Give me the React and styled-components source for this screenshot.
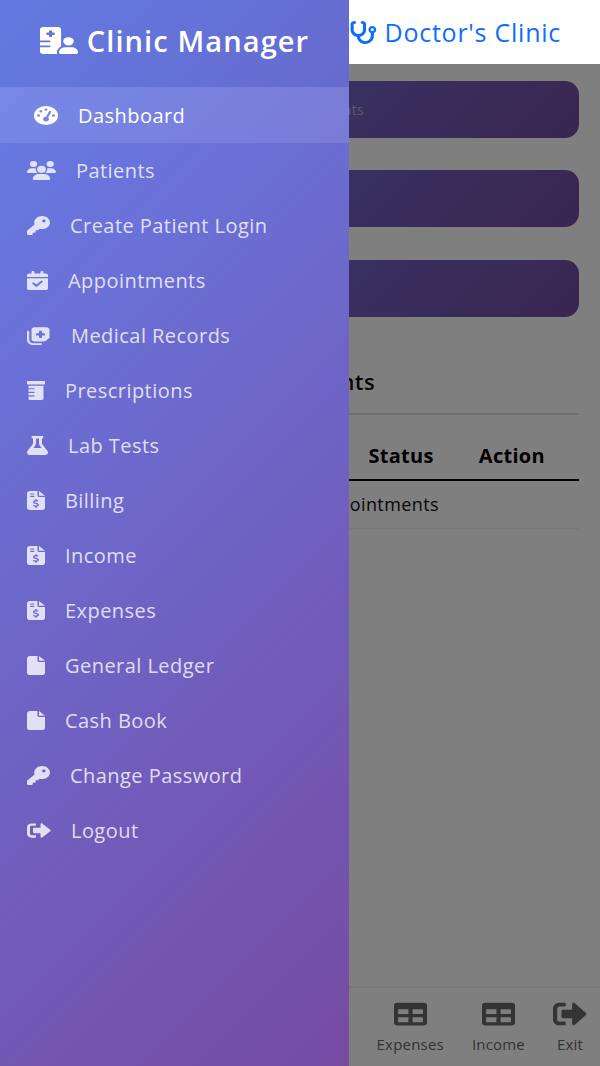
import React from 'react';
import styled, { createGlobalStyle } from 'styled-components';
import { FaHospitalUser, FaUsers, FaKey, FaCalendarCheck, FaNotesMedical, FaFlask, FaFileInvoiceDollar, FaFile, FaStethoscope, FaGaugeHigh } from 'react-icons/fa6';
import { FaPrescriptionBottle, FaSignOutAlt, FaTable } from 'react-icons/fa';

const NAV_LINKS = [
  { name: 'Dashboard', icon: FaGaugeHigh, width: 24, active: true },
  { name: 'Patients', icon: FaUsers, width: 29 },
  { name: 'Create Patient Login', icon: FaKey, width: 23 },
  { name: 'Appointments', icon: FaCalendarCheck, width: 21 },
  { name: 'Medical Records', icon: FaNotesMedical, width: 24 },
  { name: 'Prescriptions', icon: FaPrescriptionBottle, width: 18 },
  { name: 'Lab Tests', icon: FaFlask, width: 21 },
  { name: 'Billing', icon: FaFileInvoiceDollar, width: 18 },
  { name: 'Income', icon: FaFileInvoiceDollar, width: 18 },
  { name: 'Expenses', icon: FaFileInvoiceDollar, width: 18 },
  { name: 'General Ledger', icon: FaFile, width: 18 },
  { name: 'Cash Book', icon: FaFile, width: 18 },
  { name: 'Change Password', icon: FaKey, width: 23 },
  { name: 'Logout', icon: FaSignOutAlt, width: 24 },
];

const BOTTOM_LINKS = [
  { name: 'Expenses', icon: FaTable },
  { name: 'Income', icon: FaTable },
  { name: 'Exit', icon: FaSignOutAlt, tall: true },
];

export default function App() {
  return (
    <Page>
      <GlobalStyle />
      <TopBar>
        <Brand>
          <FaStethoscope preserveAspectRatio="none" />
          <span>Doctor's Clinic</span>
        </Brand>
      </TopBar>
      <Content>
        <StatCard>Appointments</StatCard>
        <StatCard />
        <StatCard />
        <SectionTitle>Appointments</SectionTitle>
        <TableHead>
          <span>Status</span>
          <span>Action</span>
        </TableHead>
        <TableRow>No Appointments</TableRow>
      </Content>
      <BottomNav>
        {BOTTOM_LINKS.map((link) => (
          <BottomItem key={link.name} $tall={link.tall}>
            <link.icon preserveAspectRatio="none" />
            <span>{link.name}</span>
          </BottomItem>
        ))}
      </BottomNav>
      <Overlay />
      <Drawer>
        <DrawerHeader>
          <FaHospitalUser preserveAspectRatio="none" />
          <span>Clinic Manager</span>
        </DrawerHeader>
        <NavList>
          {NAV_LINKS.map((link) => (
            <NavItem key={link.name} $active={link.active} $iconWidth={link.width}>
              <link.icon preserveAspectRatio="none" />
              <span>{link.name}</span>
            </NavItem>
          ))}
        </NavList>
      </Drawer>
    </Page>
  );
}

const GlobalStyle = createGlobalStyle`
  html, body {
    margin: 0;
    padding: 0;
    background: #fff;
  }
  * {
    box-sizing: border-box;
  }
`;

const Page = styled.div`
  position: relative;
  width: 600px;
  height: 1066px;
  overflow: hidden;
  display: flex;
  flex-direction: column;
  background: #fff;
  font-family: "Open Sans", "Noto Sans", sans-serif;
`;

const TopBar = styled.header`
  position: relative;
  z-index: 2;
  flex: none;
  height: 64px;
  background: #fff;
  display: flex;
  align-items: center;
  justify-content: flex-end;
  padding-right: 39px;
`;

const Brand = styled.div`
  display: flex;
  align-items: center;
  gap: 8px;
  color: #0d6efd;
  font-size: 25px;
  letter-spacing: 0.75px;

  svg {
    height: 23px;
    width: 28px;
  }
`;

const Content = styled.main`
  flex: 1;
  display: flex;
  flex-direction: column;
  padding: 17px 21px 0;
`;

const StatCard = styled.div`
  flex: none;
  height: 57px;
  margin-bottom: 32px;
  border-radius: 14px;
  background: linear-gradient(135deg, #667eea, #764ba2);
  display: flex;
  align-items: center;
  justify-content: flex-end;
  padding: 0 215px 0 0;
  color: rgba(255, 255, 255, 0.55);
  font-size: 14px;
  letter-spacing: 0.3px;

  &:nth-of-type(2) {
    margin-bottom: 33px;
  }
`;

const SectionTitle = styled.h2`
  margin: 0;
  height: 66px;
  display: flex;
  align-items: center;
  justify-content: flex-end;
  padding: 0 204px 0 0;
  border-bottom: 2px solid #ddd;
  font-size: 22px;
  letter-spacing: 0.4px;
  font-weight: 600;
  color: #111;
`;

const TableHead = styled.div`
  height: 66px;
  display: flex;
  align-items: center;
  justify-content: flex-end;
  gap: 45px;
  padding: 16px 34px 0 0;
  border-bottom: 2px solid #000;
  font-size: 20px;
  letter-spacing: 0.3px;
  font-weight: 700;
  color: #000;
`;

const TableRow = styled.div`
  height: 48px;
  display: flex;
  align-items: center;
  justify-content: flex-end;
  padding: 0 140px 2px 0;
  border-bottom: 1px solid #eee;
  font-size: 18px;
  letter-spacing: 0.4px;
  color: #111;
`;

const BottomNav = styled.nav`
  flex: none;
  height: 78px;
  background: #fff;
  box-shadow: 0 -1px 3px rgba(0, 0, 0, 0.1);
  display: flex;
  justify-content: flex-end;
  align-items: flex-start;
  gap: 28px;
  padding: 13px 13px 0 0;
`;

const BottomItem = styled.div`
  min-width: 34px;
  display: flex;
  flex-direction: column;
  align-items: center;
  gap: 7px;
  font-size: 15px;
  letter-spacing: 0.2px;
  color: #666;

  svg {
    height: ${({ $tall }) => ($tall ? '30px' : '26px')};
    width: ${({ $tall }) => ($tall ? '34px' : '33px')};
    margin: ${({ $tall }) => ($tall ? '-2px 0' : '0')};
    color: #686868;
  }
`;

const Overlay = styled.div`
  position: absolute;
  inset: 0;
  z-index: 1;
  background: rgba(0, 0, 0, 0.5);
`;

const Drawer = styled.aside`
  position: absolute;
  top: 0;
  left: 0;
  bottom: 0;
  z-index: 3;
  width: 349px;
  background: linear-gradient(135deg, #667eea, #764ba2);
  display: flex;
  flex-direction: column;
`;

const DrawerHeader = styled.div`
  flex: none;
  height: 87px;
  display: flex;
  align-items: center;
  justify-content: center;
  gap: 9px;
  padding-bottom: 6px;
  color: #fff;
  font-size: 29px;
  letter-spacing: 1.1px;
  font-weight: 600;
  background: rgba(0, 0, 0, 0.03);

  svg {
    height: 27px;
    width: 38px;
  }
`;

const NavList = styled.div`
  display: flex;
  flex-direction: column;
`;

const NavItem = styled.div`
  flex: none;
  height: ${({ $active }) => ($active ? '56px' : '55px')};
  display: flex;
  align-items: center;
  gap: 20px;
  padding: ${({ $active }) => ($active ? '0 0 0 34px' : '0 0 0 27px')};
  color: ${({ $active }) => ($active ? '#fff' : 'rgba(255, 255, 255, 0.8)')};
  background: ${({ $active }) => ($active ? 'rgba(255, 255, 255, 0.1)' : 'transparent')};
  font-size: 20px;
  letter-spacing: 0.45px;

  svg {
    flex: none;
    height: 19px;
    width: ${({ $iconWidth }) => $iconWidth}px;
  }
`;
